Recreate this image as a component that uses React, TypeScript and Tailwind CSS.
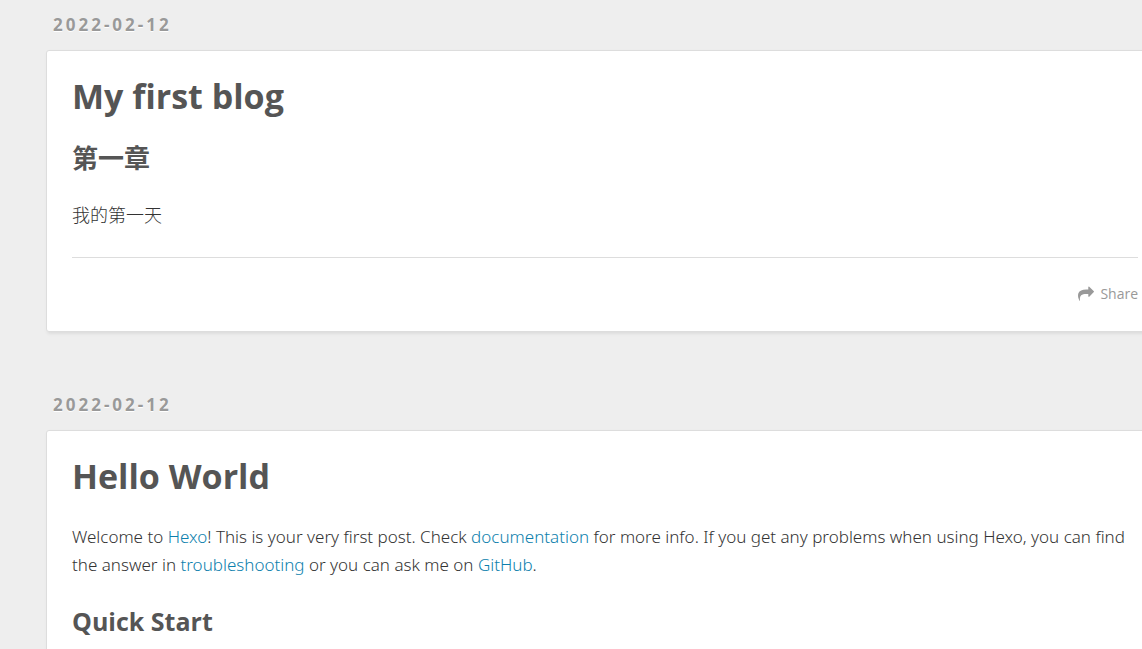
import type { ReactNode } from "react";

function PostLink({ href, children }: { href: string; children: ReactNode }) {
  return (
    <a href={href} className="text-[#0d7fad] hover:underline">
      {children}
    </a>
  );
}

function Post({ title, children, footer }: { title: string; children: ReactNode; footer?: boolean }) {
  return (
    <article className="mb-[61px]">
      <a
        href="#archive"
        className="ml-[7px] block text-[17px] leading-6 font-bold tracking-[3px] text-[#999] [text-shadow:0_1px_#fff]"
      >
        <time dateTime="2022-02-12">2022-02-12</time>
      </a>
      <div className="mt-[13px] rounded-[3px] border border-[#ddd] bg-white px-[25px] pb-[25px] shadow-[1px_2px_3px_#ddd]">
        <h1 className="pt-[23px] text-[34px] leading-[44px] font-bold">{title}</h1>
        {children}
        {footer && (
          <footer className="mt-7 flex justify-end border-t border-[#ddd] pt-6 text-[14px] leading-6 text-[#999]">
            <a href="#share" className="flex items-center gap-1.5">
              <svg viewBox="0 0 1792 1792" className="size-4" fill="currentColor" aria-hidden="true">
                <path d="M1792 640q0 26-19 45l-512 512q-19 19-45 19t-45-19-19-45v-256h-224q-98 0-175.500 6t-154 21.500-133 42.500-105.500 69.500-80 101-48.500 138.500-17.500 181q0 55 5 123 0 6 2.500 23.500t2.500 26.500q0 15-8.500 25t-23.500 10q-16 0-28-17-7-9-13-22t-13.500-30-10.500-24q-127-285-127-451 0-199 53-333 162-403 875-403h224v-256q0-26 19-45t45-19 45 19l512 512q19 19 19 45z" />
              </svg>
              Share
            </a>
          </footer>
        )}
      </div>
    </article>
  );
}

export default function App() {
  return (
    <div className="h-screen overflow-hidden bg-[#eee] font-['Open_Sans','Noto_Sans_CJK_SC',sans-serif] text-[#555]">
      <main className="-mr-[22px] ml-[46px] pt-[13px]">
        <Post title="My first blog" footer>
          <h2 className="mt-[22px] text-[26px] leading-9 font-bold">第一章</h2>
          <p className="mt-[25px] text-[18px] leading-7 font-light text-[#333]">我的第一天</p>
        </Post>
        <Post title="Hello World">
          <p className="mt-[25px] font-['Noto_Sans',sans-serif] text-[17px] leading-7 font-light text-[#333]">
            Welcome to <PostLink href="https://hexo.io/">Hexo</PostLink>! This is your very first post. Check{" "}
            <PostLink href="https://hexo.io/docs/">documentation</PostLink> for more info. If you get any problems when
            using Hexo, you can find the answer in{" "}
            <PostLink href="https://hexo.io/docs/troubleshooting.html">troubleshooting</PostLink> or you can ask me on{" "}
            <PostLink href="https://github.com/hexojs/hexo/issues">GitHub</PostLink>.
          </p>
          <h2 className="mt-6 text-[25px] leading-9 font-bold">Quick Start</h2>
        </Post>
      </main>
    </div>
  );
}
